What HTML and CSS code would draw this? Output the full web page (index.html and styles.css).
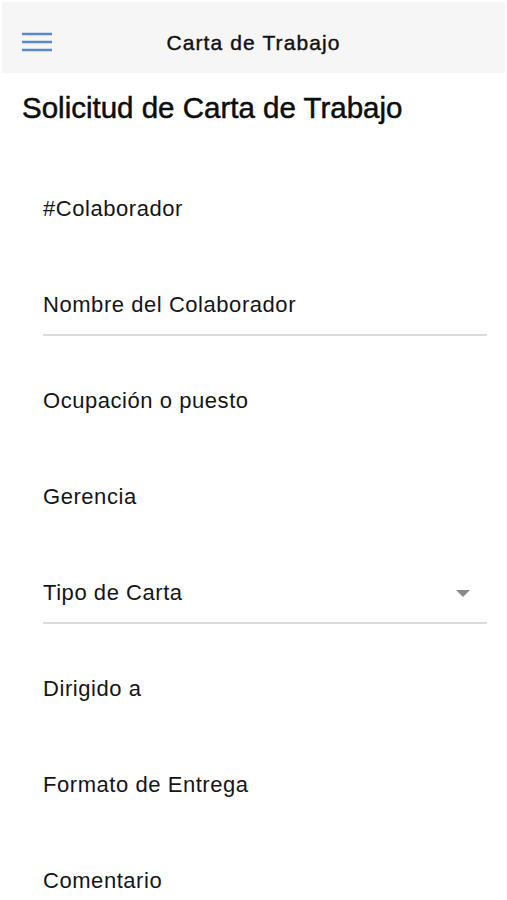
FILE: index.html
```html
<!DOCTYPE html>
<html lang="es">
<head>
<meta charset="utf-8">
<title>Carta de Trabajo</title>
<link rel="stylesheet" href="styles.css">
</head>
<body>
<header class="toolbar">
  <button class="menu-btn" aria-label="Menú">
    <svg width="30" height="20" viewBox="0 0 30 20"><path d="M0 2H30M0 10H30M0 18H30" stroke="#5b86d3" stroke-width="2.4" fill="none"/></svg>
  </button>
  <div class="toolbar-title">Carta de Trabajo</div>
</header>
<main class="content">
  <h1 class="page-title">Solicitud de Carta de Trabajo</h1>
  <div class="fields">
    <div class="field"><div class="row"><span class="label">#Colaborador</span></div></div>
    <div class="field underlined"><div class="row"><span class="label">Nombre del Colaborador</span></div></div>
    <div class="field"><div class="row"><span class="label">Ocupación o puesto</span></div></div>
    <div class="field"><div class="row"><span class="label">Gerencia</span></div></div>
    <div class="field underlined"><div class="row select"><span class="label">Tipo de Carta</span><span class="caret"></span></div></div>
    <div class="field"><div class="row"><span class="label">Dirigido a</span></div></div>
    <div class="field"><div class="row"><span class="label">Formato de Entrega</span></div></div>
    <div class="field last"><div class="row"><span class="label">Comentario</span></div></div>
  </div>
</main>
</body>
</html>
```
FILE: styles.css
```css
* { box-sizing: border-box; }
html, body { margin: 0; padding: 0; background: #fff; }
body {
  font-family: "Liberation Sans", Arial, sans-serif;
  color: #111;
  width: 507px;
}
.toolbar {
  margin: 2px 2px 0 2px;
  height: 71px;
  background: #f6f6f6;
  display: flex;
  align-items: center;
  position: relative;
}
.menu-btn {
  background: none;
  border: 0;
  padding: 0;
  margin-left: 20px;
  margin-top: 9px;
  display: flex;
}
.toolbar-title {
  position: absolute;
  left: 0; right: 0;
  top: 29px;
  text-align: center;
  font-size: 21px;
  letter-spacing: 1.1px;
  -webkit-text-stroke: 0.4px #111;
  color: #111;
  line-height: 24px;
}
.content { padding: 0 20px 0 22px; }
.page-title {
  margin: 18px 0 0 0;
  font-size: 29.5px;
  font-weight: 400;
  -webkit-text-stroke: 0.5px #0d0d0d;
  line-height: 34px;
  color: #0d0d0d;
}
.fields {
  padding: 71px 0 0 21px;
  display: flex;
  flex-direction: column;
}
.field {
  height: 96px;
  font-size: 22px;
  letter-spacing: 0.55px;
  line-height: 26px;
}
.field.last { height: 26px; }
.row {
  display: flex;
  align-items: flex-start;
  height: 26px;
}
.label { color: #151515; }
.field.underlined::after {
  content: "";
  display: block;
  margin-top: 16px;
  height: 2px;
  background: #dcdcdc;
}
.select { justify-content: space-between; }
.caret {
  width: 0; height: 0;
  border-left: 7px solid transparent;
  border-right: 7px solid transparent;
  border-top: 7px solid #8a8a8a;
  margin: 10px 17px 0 0;
}
```
